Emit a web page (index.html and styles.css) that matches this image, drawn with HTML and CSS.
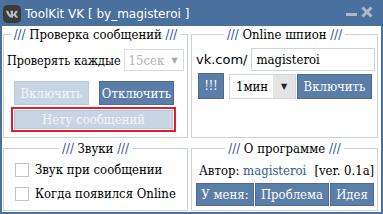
FILE: index.html
```html
<!DOCTYPE html>
<html>
<head>
<meta charset="utf-8">
<link rel="stylesheet" href="styles.css">
</head>
<body>
<div class="window">
  <div class="titlebar">
    <svg class="logo" width="18" height="18" viewBox="0 0 24 24">
      <rect x="3" y="6" width="18" height="12" fill="#b9b9b9"/>
      <path fill="#3b3b3b" fill-rule="evenodd" d="M15.684 0H8.316C1.592 0 0 1.592 0 8.316v7.368C0 22.408 1.592 24 8.316 24h7.368C22.408 24 24 22.408 24 15.684V8.316C24 1.592 22.391 0 15.684 0zm3.692 17.123h-1.744c-.66 0-.864-.525-2.050-1.727-1.033-1-1.490-1.135-1.744-1.135-.356 0-.458.102-.458.593v1.575c0 .424-.135.678-1.253.678-1.846 0-3.896-1.118-5.335-3.202C4.624 10.857 4.030 8.570 4.030 8.096c0-.254.102-.491.593-.491h1.744c.44 0 .61.203.78.677.863 2.490 2.303 4.675 2.896 4.675.22 0 .322-.102.322-.66V9.721c-.068-1.186-.695-1.287-.695-1.710 0-.204.17-.407.44-.407h2.744c.373 0 .508.203.508.643v3.473c0 .372.17.508.271.508.22 0 .407-.136.813-.542 1.254-1.406 2.151-3.574 2.151-3.574.119-.254.322-.491.763-.491h1.744c.525 0 .644.27.525.643-.22 1.017-2.354 4.031-2.354 4.031-.186.305-.254.44 0 .78.186.254.796.779 1.203 1.253.745.847 1.320 1.558 1.473 2.050.17.490-.085.744-.576.744z"/>
    </svg>
    <span class="title">ToolKit VK [ by_magisteroi ]</span>
    <svg class="winbtns" width="28" height="12" viewBox="0 0 28 12">
      <rect x="0" y="7" width="11" height="3" fill="#a7bad0"/>
      <path d="M16.5 1.5 L25.5 10.5 M25.5 1.5 L16.5 10.5" stroke="#a7bad0" stroke-width="3"/>
    </svg>
  </div>
  <div class="body">
    <fieldset class="box">
      <legend><span class="sl">///</span> Проверка сообщений <span class="sl">///</span></legend>
      <div class="row check-row">
        <span class="label">Проверять каждые</span>
        <div class="select disabled"><span>15сек</span><span class="arrow">▼</span></div>
      </div>
      <div class="row btn-row">
        <div class="btn off w74">Включить</div>
        <div class="btn w74">Отключить</div>
      </div>
      <div class="alert">
        <div class="btn off wide">Нету сообщений</div>
      </div>
    </fieldset>
    <fieldset class="box">
      <legend><span class="sl">///</span> Online шпион <span class="sl">///</span></legend>
      <div class="row vk-row">
        <span class="sans">vk.com/</span>
        <div class="input">magisteroi</div>
      </div>
      <div class="row spy-row">
        <div class="btn bang">!!!</div>
        <div class="select mins"><span>1мин</span><span class="arrow dark">▼</span></div>
        <div class="btn w75">Включить</div>
      </div>
    </fieldset>
    <fieldset class="box">
      <legend><span class="sl">///</span> Звуки <span class="sl">///</span></legend>
      <label class="cb first"><span class="box13"></span>Звук при сообщении</label>
      <label class="cb"><span class="box13"></span>Когда появился Online</label>
    </fieldset>
    <fieldset class="box">
      <legend><span class="sl">///</span> О программе <span class="sl">///</span></legend>
      <div class="about">Автор: <span class="link">magisteroi</span><span class="ver">[ver. 0.1a]</span></div>
      <div class="row about-btns">
        <div class="btn b1">У меня:</div>
        <div class="btn b2">Проблема</div>
        <div class="btn b3">Идея</div>
      </div>
    </fieldset>
  </div>
</div>
</body>
</html>
```
FILE: styles.css
```css
* { box-sizing: border-box; }
html, body { margin: 0; padding: 0; background: #fff; }
body { width: 383px; height: 214px; overflow: hidden; font-family: "DejaVu Serif Condensed", "DejaVu Serif", serif; color: #000; }
.window { width: 383px; height: 214px; display: flex; flex-direction: column; }
.titlebar { height: 26px; background: #4a709d; display: flex; align-items: center; padding-left: 3px; }
.logo { display: block; margin-top: 1px; }
.title { font-family: "DejaVu Sans", sans-serif; font-size: 12px; color: #fff; margin-left: 4px; margin-top: 1px; }
.winbtns { margin-left: auto; margin-right: 9px; margin-top: -3px; }
.body { flex: 1; border: 2px solid #4a709d; border-top: 0; padding: 1px 2px 1px 1px;
  display: grid; grid-template-columns: 185px 187px; grid-template-rows: 111px 70px; column-gap: 3px; row-gap: 3px; }
.box { margin: 0; padding: 0; border: 1px solid #c9d1da; min-width: 0; font-family: inherit; }
legend { margin: 0 auto; padding: 0 3px; font-size: 13px; line-height: 15px; font-family: inherit; }
.sl { color: #26479a; }
.row { display: flex; align-items: center; white-space: nowrap; }
.label { font-size: 12.5px; }
.check-row { margin: 7px 0 0 3px; }
.select { height: 22px; display: flex; align-items: center; border: 1px solid #dcdcdc; font-size: 13px; }
.select.disabled { width: 60px; margin-left: 3px; color: #b3b3b3; padding-left: 4px; }
.select .arrow { margin-left: auto; font-size: 8px; color: #a8a8a8; width: 16px; text-align: center; font-family: "DejaVu Sans", sans-serif; }
.btn { height: 24px; display: flex; align-items: center; justify-content: center; background: #5b7ea9; border: 1px solid #4a6a93; color: #fff; font-size: 13px; }
.btn.off { background: #c6d4e4; border-color: #b9c9db; color: #f3f6fa; }
.btn-row { margin: 10px 0 0 10px; gap: 10px; }
.w74 { width: 75px; }
.alert { margin: 2px 0 0 7px; width: 165px; height: 25px; border: 2px solid #e31e2a; padding: 1px; }
.alert .wide { height: 19px; width: 100%; }
.sans { font-family: "DejaVu Sans", sans-serif; font-size: 13px; margin-left: 4px; }
.vk-row { margin: 6px 0 0 0; }
.input { margin-left: 3px; width: 124px; height: 23px; border: 1px solid #cbd5df; font-size: 13px; padding-left: 5px; display: flex; align-items: center; }
.spy-row { margin: 2px 0 0 6px; }
.bang { width: 26px; height: 26px; font-size: 12px; }
.select.mins { margin-left: 5px; width: 67px; height: 25px; border-color: #cfd8e2; padding-left: 6px; }
.arrow.dark { color: #222; background: #e4e4e4; height: 23px; width: 22px; display: flex; align-items: center; justify-content: center; font-size: 8px; }
.w75 { width: 75px; height: 25px; margin-left: 1px; }
.cb { display: flex; align-items: center; font-size: 13px; margin-left: 11px; white-space: nowrap; }
.cb.first { margin-top: 6px; }
.cb + .cb { margin-top: 9px; }
.box13 { width: 14px; height: 14px; border: 1px solid #c3c3c3; margin-right: 6px; }
.about { font-size: 13px; margin: 7px 0 0 7px; white-space: nowrap; }
.link { color: #2f5c8a; }
.ver { margin-left: 8px; }
.about-btns { margin: 5px 0 0 4px; gap: 1px; }
.b1 { width: 58px; height: 23px; }
.b2 { width: 74px; height: 23px; }
.b3 { width: 44px; height: 23px; }
```
